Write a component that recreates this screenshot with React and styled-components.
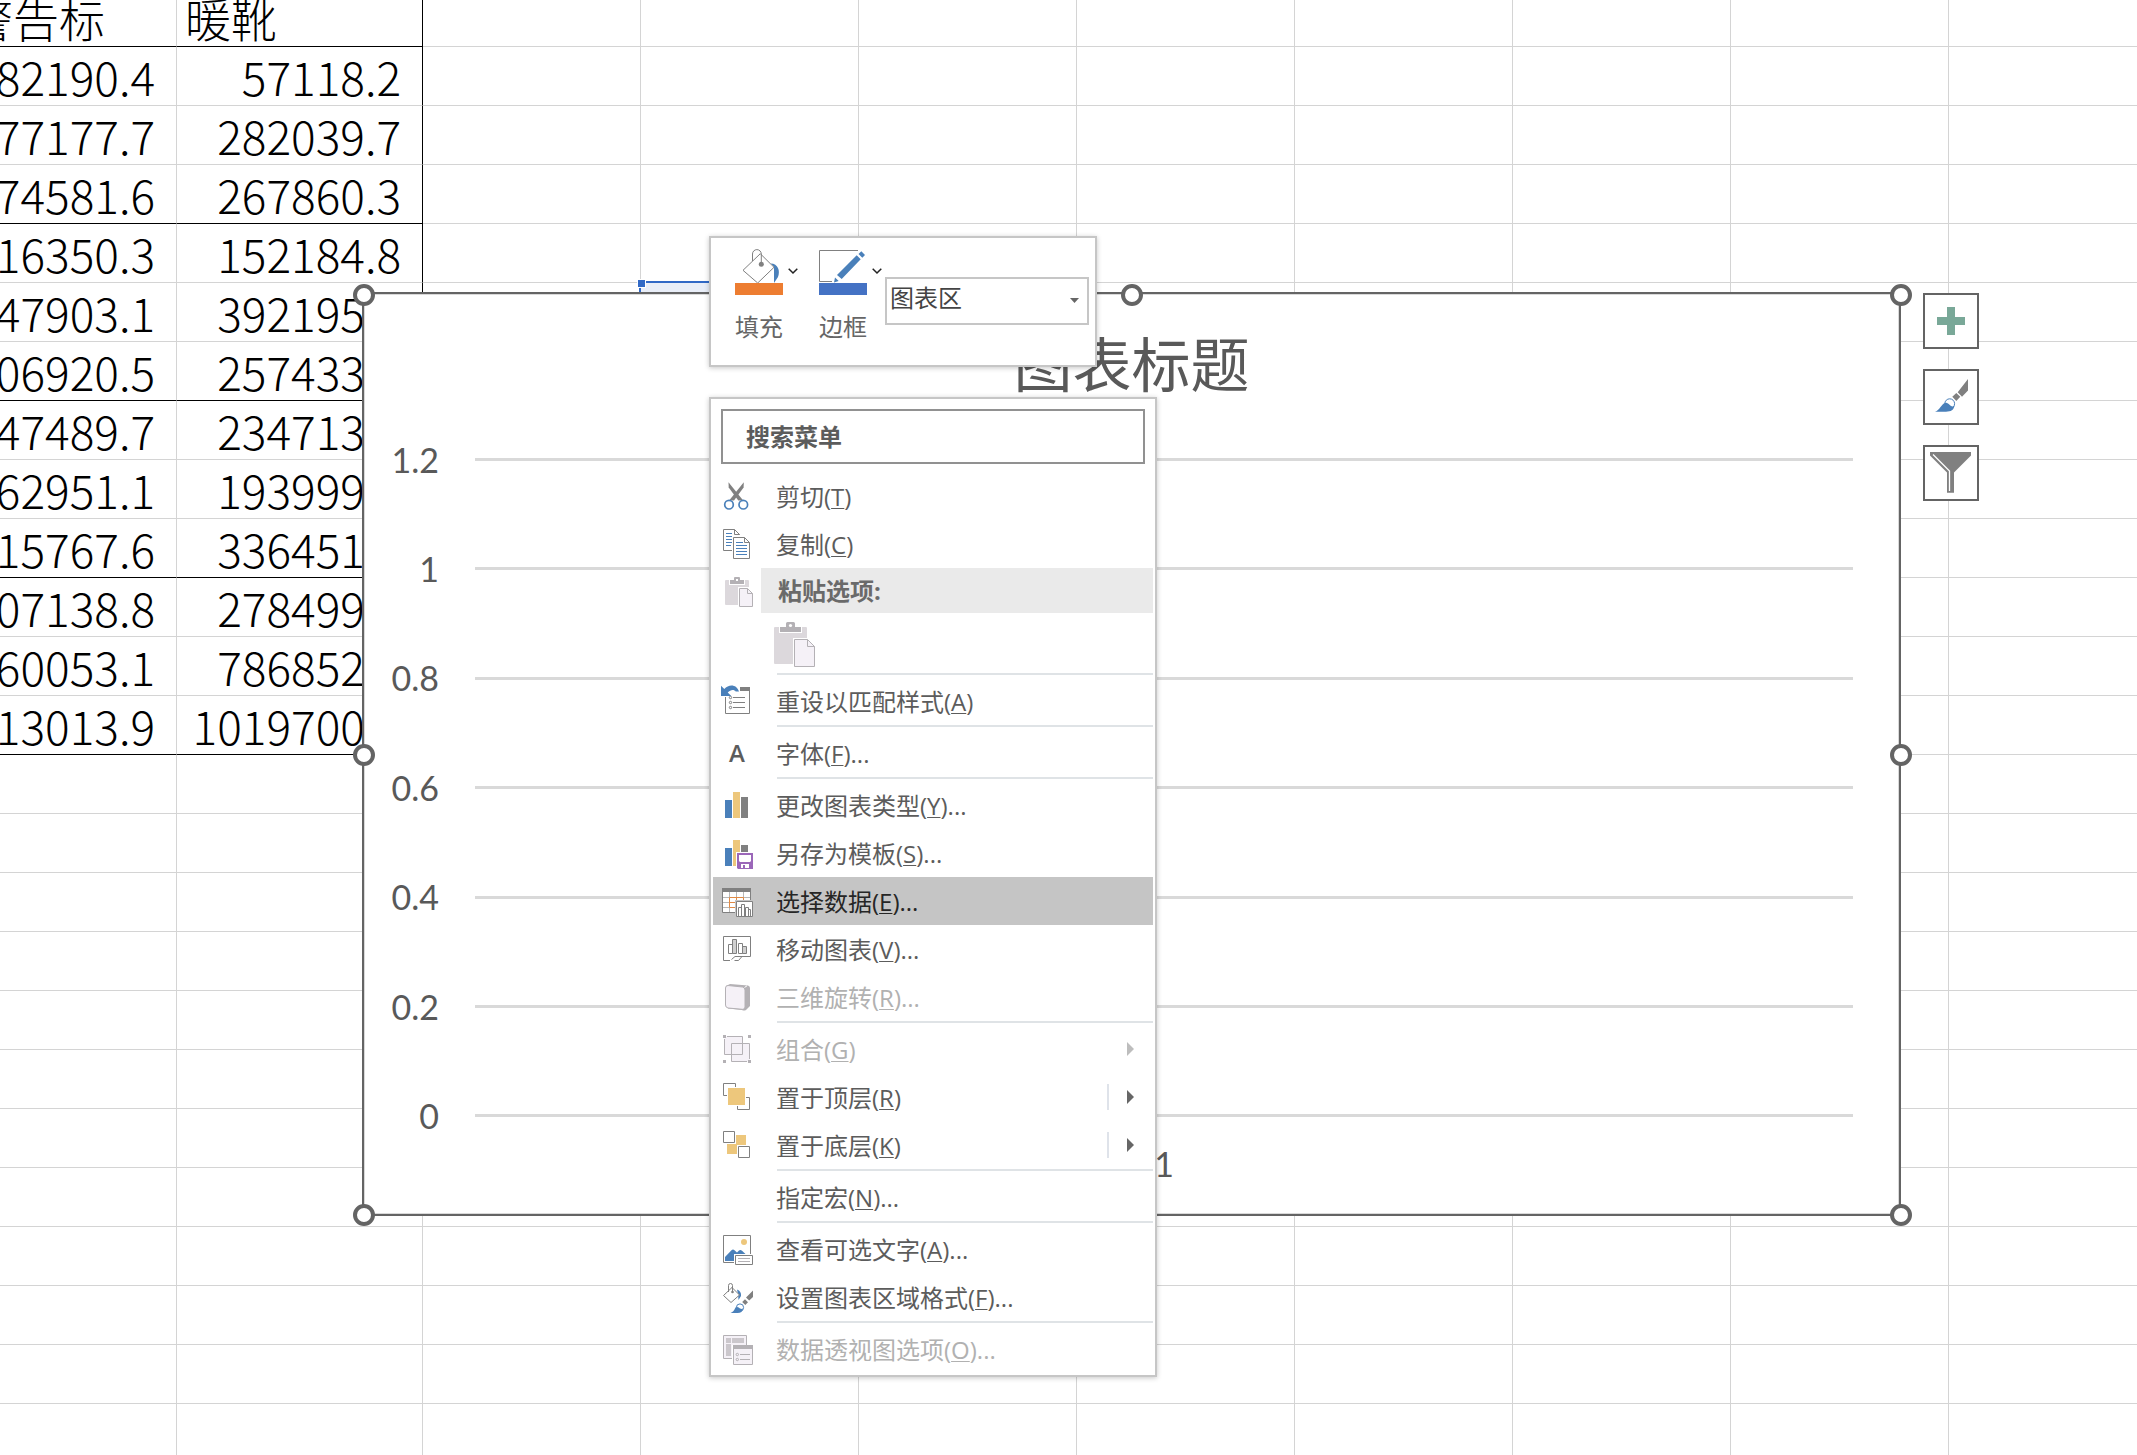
import React from "react";
import styled, { createGlobalStyle, css } from "styled-components";

const GRAY = "#808080";
const BLUE = "#4a80ba";
const GOLD = "#edc77c";
const MUTED = "#b4b1b5";
const PALE = "#f5f1f7";

const Global = createGlobalStyle`
  * { box-sizing: border-box; }
  body { margin: 0; background: #fff; overflow: hidden; }
  button, input, select { font: inherit; color: inherit; margin: 0; }
`;

const Workspace = styled.main`
  position: relative;
  height: 100vh;
  overflow: hidden;
  font-family: "Open Sans", "Noto Sans CJK SC", sans-serif;
  font-size: 24px;
  line-height: 32px;
  color: #5c5c5c;
`;

/* ---------- worksheet ---------- */

const Sheet = styled.table`
  width: calc(100% + 42px);
  margin: -12px 0 0 -41px;
  table-layout: fixed;
  border-collapse: separate;
  border-spacing: 0;
  font-family: "Noto Sans CJK SC", sans-serif;
  font-weight: 300;
  font-size: 46px;
  line-height: 58px;
  color: #000;
`;

const Column = styled.col`
  width: ${(p) => (p.$w ? p.$w + "px" : "auto")};
`;

const cell = css`
  position: relative;
  height: 59px;
  padding: 0 21px 0 8px;
  white-space: nowrap;
  border-right: 1px solid ${(p) => (p.$edge ? "#000" : "#d4d4d4")};
  border-bottom: 1px solid ${(p) => (p.$rule ? "#000" : "#d4d4d4")};
`;

const Cell = styled.td`
  ${cell}
  text-align: right;
`;

const HeadCell = styled.th`
  ${cell}
  font-weight: inherit;
  text-align: left;
`;

const Selection = styled.div`
  position: absolute;
  top: -2px;
  left: -2px;
  width: 220px;
  height: 61px;
  border: 2px solid #3169c6;
  background: #e9eef8;

  &::before {
    content: "";
    position: absolute;
    top: -4px;
    left: -4px;
    width: 7px;
    height: 7px;
    border: 1px solid #fff;
    background: #3169c6;
  }
`;

/* ---------- chart ---------- */

const ChartObject = styled.section`
  position: absolute;
  top: 292px;
  left: 362px;
  width: 1539px;
  height: 924px;
  display: flex;
  flex-direction: column;
  padding: 28px 46px 16px 8px;
  border: 2px solid #646464;
  background: #fff;
  box-shadow: inset 0 0 0 1px #d9d9d9;
  color: #595959;
`;

const ChartTitle = styled.h1`
  margin: 0 0 0 38px;
  font-family: "Noto Sans CJK SC", sans-serif;
  font-weight: 400;
  font-size: 59px;
  line-height: 80px;
  text-align: center;
`;

const Plot = styled.div`
  display: flex;
  flex-direction: column;
  margin-top: 3px;
  font-family: Lato, "Noto Sans CJK SC", sans-serif;
  font-size: 34px;
`;

const GridRow = styled.div`
  display: flex;
  align-items: center;
  gap: 36px;
  height: ${(p) => (p.$tall ? 110 : 109)}px;
`;

const AxisLabel = styled.span`
  width: 67px;
  line-height: 40px;
  text-align: right;
`;

const GridLine = styled.span`
  flex: 1;
  height: 3px;
  background: #d9d9d9;
`;

const Category = styled.div`
  padding-left: 103px;
  line-height: 40px;
  margin-top: -26px;
  text-align: center;
`;

const Handle = styled.span`
  position: absolute;
  top: ${(p) => p.$y};
  left: ${(p) => p.$x};
  width: 22px;
  height: 22px;
  margin: -11px;
  border: 4px solid #646464;
  border-radius: 50%;
  background: #fff;
`;

const SideButtons = styled.div`
  position: absolute;
  top: 293px;
  left: 1923px;
  display: flex;
  flex-direction: column;
  gap: 20px;
`;

const SideButton = styled.button`
  width: 56px;
  height: 56px;
  padding: 0;
  border: 2px solid #646464;
  background: #fff;

  svg { display: block; }
`;

/* ---------- popups ---------- */

const Popups = styled.div`
  position: absolute;
  top: 236px;
  left: 709px;
  display: flex;
  flex-direction: column;
  align-items: flex-start;
  gap: 30px;
`;

const panel = css`
  border: 2px solid #c6c6c6;
  background: #fff;
  box-shadow: 0 1px 5px rgba(0, 0, 0, 0.22);
`;

const MiniToolbar = styled.div`
  ${panel}
  display: flex;
  align-items: flex-start;
  width: 388px;
  padding: 9px 6px 22px 24px;
`;

const ToolButton = styled.button`
  display: grid;
  grid-template-columns: 48px 10px;
  column-gap: 5px;
  row-gap: 16px;
  align-items: center;
  margin-right: ${(p) => p.$gap}px;
  padding: 0;
  border: 0;
  background: none;
  color: #666;
  white-space: nowrap;

  svg { display: block; overflow: visible; }
`;

const SelectBox = styled.div`
  position: relative;
  flex: 1;
  margin-top: 30px;

  svg {
    position: absolute;
    top: 21px;
    right: 10px;
    pointer-events: none;
  }
`;

const AreaSelect = styled.select`
  display: block;
  width: 100%;
  height: 48px;
  padding: 0 28px 6px 3px;
  border: 2px solid #c6c6c6;
  border-radius: 0;
  appearance: none;
  background: #fff;
  color: #444;
`;

const Menu = styled.div`
  ${panel}
  display: flex;
  flex-direction: column;
  width: 448px;
  padding: 10px 2px 2px;
`;

const SearchInput = styled.input`
  height: 55px;
  margin: 0 8px 8px;
  padding: 0 23px;
  border: 2px solid #919191;
  background: #fff;
  font-weight: 700;

  &::placeholder { color: #5c5c5c; opacity: 1; }
`;

const MenuItem = styled.button`
  display: flex;
  align-items: center;
  gap: 23px;
  height: 48px;
  padding: 0 19px 0 8px;
  border: 0;
  background: ${(p) => (p.$active ? "#c5c5c5" : "transparent")};
  color: ${(p) => (p.disabled ? "#b1b1b1" : p.$active ? "#262626" : "#5c5c5c")};
  text-align: left;
  white-space: nowrap;
`;

const IconSlot = styled.span`
  display: grid;
  place-items: center;
  width: 32px;
  height: 32px;
  font-weight: 600;

  svg { display: block; overflow: visible; }
`;

const ItemText = styled.span`
  flex: 1;
  padding-top: 2px;

  u {
    text-decoration-thickness: 1px;
    text-underline-offset: 2px;
  }
`;

const Split = styled.span`
  width: 2px;
  height: 26px;
  margin-right: -5px;
  background: #dfe3ea;
`;

const Divider = styled.hr`
  width: auto;
  height: 2px;
  margin: 0 0 2px 64px;
  border: 0;
  background: #dfe3e6;
`;

const PasteHeader = styled.div`
  display: flex;
  align-items: center;
  gap: 8px;
  height: 45px;
  padding-left: 8px;
`;

const PasteTitle = styled.strong`
  flex: 1;
  padding: 7px 17px 6px;
  background: #eaeaea;
  color: #6a6a6a;
`;

const PasteOptions = styled.div`
  display: flex;
  align-items: center;
  height: 60px;
  padding: 3px 0 0 61px;
`;

const PasteButton = styled.button`
  padding: 0;
  border: 0;
  background: none;

  svg { display: block; }
`;

/* ---------- icons ---------- */

const Icon = ({ size = 32, w, h, children }) => (
  <svg width={w || size} height={h || size} viewBox={`0 0 ${w || size} ${h || size}`} fill="none" aria-hidden="true">
    {children}
  </svg>
);

const CutIcon = () => (
  <Icon>
    <path d="M7.5 2.3 7.7 7.5 17.3 20.5 22 20.3 Z" fill={GRAY} />
    <path d="M22.8 2.3 22.6 7.5 13 20.5 8.3 20.3 Z" fill={GRAY} />
    <circle cx="8" cy="24.7" r="4.3" fill="#fff" stroke={BLUE} strokeWidth="1.7" />
    <circle cx="22.3" cy="24.7" r="4.3" fill="#fff" stroke={BLUE} strokeWidth="1.7" />
  </Icon>
);

const CopyIcon = () => (
  <Icon>
    <path d="M11 22.5H2.5V1.5H13.5L18.5 6.5V7M13.5 1.5V6.5H18.5" stroke={GRAY} />
    <path d="M5 5.5H11M5 8.5H11M5 11.5H11M5 14.5H11M5 17.5H10" stroke={BLUE} />
    <path d="M12.5 9.5H23.5L28.5 14.5V30.5H12.5Z" fill="#fff" stroke={GRAY} />
    <path d="M23.5 9.5V14.5H28.5" stroke={GRAY} />
    <path d="M15 14.5H22M15 17.5H26M15 20.5H26M15 23.5H26M15 26.5H26" stroke={BLUE} />
  </Icon>
);

const PasteIcon = () => (
  <Icon>
    <rect x="4" y="5" width="24" height="25" rx="1" fill="#dcd8dc" />
    <path d="M8 4H24V10H8Z" fill="#fff" />
    <path d="M9 5H13V3Q13 2 14 2H18Q19 2 19 3V5H23V9H9Z" fill={MUTED} />
    <rect x="15" y="4" width="2" height="2" fill="#fff" />
    <path d="M17 12H28L33 17V33H17Z" fill="#fff" />
    <path d="M18.5 13.5H26.5L31.5 18.5V31.5H18.5Z" fill={PALE} stroke={MUTED} />
    <path d="M26.5 13.5V18.5H31.5" stroke={MUTED} />
  </Icon>
);

const PasteLargeIcon = () => (
  <Icon w={42} h={46}>
    <rect x="0" y="5" width="33" height="37" rx="1" fill="#dcd8dc" />
    <path d="M5 4H28V11H5Z" fill="#fff" />
    <path d="M6 5H12V1.5Q12 0 13.5 0H19.5Q21 0 21 1.5V5H27V10H6Z" fill={MUTED} />
    <circle cx="16.5" cy="3.5" r="1.6" fill="#fff" />
    <path d="M19 16H36L42 23V46H19Z" fill="#fff" />
    <path d="M20.5 17.5H33.5L40.5 24.5V44.5H20.5Z" fill={PALE} stroke={MUTED} />
    <path d="M33.5 17.5V24.5H40.5" stroke={MUTED} />
  </Icon>
);

const ResetIcon = () => (
  <Icon>
    <path d="M19 2.5H28.5V28.5H4.5V12" stroke={GRAY} />
    <path d="M19 2H29V6H19Z" fill={GRAY} />
    <path d="M12 12.5H24M12 17.5H24M12 22.5H24" stroke={GRAY} />
    <circle cx="9.5" cy="12.5" r="1.2" stroke={GRAY} />
    <circle cx="9.5" cy="17.5" r="1.2" stroke={GRAY} />
    <circle cx="9.5" cy="22.5" r="1.2" stroke={GRAY} />
    <path d="M0 .7V11H10.3L6.7 7.5C9.5 4.5 13 4.2 14.7 6.5H18C16-.6 8-1.6 3.3 4Z" fill={BLUE} />
  </Icon>
);

const TypeIcon = () => (
  <Icon>
    <path d="M4 11H11V29H4Z" fill={BLUE} />
    <path d="M12 3H19V29H12Z" fill={GOLD} />
    <path d="M20 8H27V29H20Z" fill={GRAY} />
  </Icon>
);

const TemplateIcon = () => (
  <Icon>
    <path d="M4 11H11V29H4Z" fill={BLUE} />
    <path d="M12 3H19V15H15V29H12Z" fill={GOLD} />
    <path d="M20 8H27V15H20Z" fill={GRAY} />
    <path d="M16 16H32V32H17L16 31Z" fill="#9b67b9" />
    <path d="M18 18H30V24L29 25H19L18 24Z" fill="#fff" />
    <path d="M20 27H28V31H24V28H22V31H20Z" fill="#fff" />
  </Icon>
);

const DataIcon = () => (
  <Icon>
    <path d="M1.5 3.5H29.5V27.5H1.5Z" fill="#fff" />
    <path d="M2 12.5H29M2 17.5H29M2 22.5H29M8.5 7V27M15.5 7V27M22.5 7V27" stroke="#b8b8b8" />
    <path d="M15 22.5H8.5V12.5H22.5V16M8.5 17.5H22M15.5 12V22" stroke="#e08a45" />
    <path d="M1.5 3.5H29.5V27.5H1.5Z" stroke={GRAY} />
    <path d="M1 3H30V7H1Z" fill={GRAY} />
    <path d="M14 15H33V33H14Z" fill="#c5c5c5" />
    <path d="M15.5 16.5H31.5V31.5H15.5Z" fill="#fff" stroke={GRAY} />
    <path d="M17.5 31V22.5H20.5V31M20.5 31V19.5H23.5V31M24.5 31V22.5H27.5V31M27.5 31V24.5H29.5V31" stroke={GRAY} />
  </Icon>
);

const MoveIcon = () => (
  <Icon>
    <path d="M9 27.5H2.5V3.5H29.5V23.5H21L17.5 27.5H13.5M10.5 26.5L14 23.5H21" stroke={GRAY} />
    <path d="M7.5 11.5H11.5V20.5H7.5ZM17.5 10.5H21.5V20.5H17.5Z" stroke={GRAY} />
    <path d="M11.5 6.5H15.5V20.5H11.5ZM21.5 13.5H25.5V20.5H21.5Z" fill="#d0d0d0" stroke={GRAY} />
  </Icon>
);

const RotateIcon = () => (
  <Icon>
    <path d="M5 5 9 3 27 4.5Q29 5 29 7V25L25 29Q23 30 21 29L7 27.5Z" fill={MUTED} />
    <path d="M7 4.5 21.5 6Q24 6.5 24 9V26Q24 28.5 21.5 28.3L7 27Q4.5 26.5 4.5 24V7Q4.5 4.5 7 4.5Z" fill={PALE} stroke={MUTED} />
    <path d="M23.5 6.5 26 4.8" stroke="#fff" />
  </Icon>
);

const GroupIcon = () => (
  <Icon>
    <path d="M3.5 3.5H21.5V21.5H3.5Z" fill={PALE} />
    <path d="M10.5 10.5H28.5V28.5H10.5Z" fill={PALE} />
    <path d="M6 3.5H21.5V21.5H3.5V6M26 28.5H10.5V10.5H28.5V26" stroke={MUTED} />
    <path d="M2 2H5V5H2ZM27 2H30V5H27ZM2 27H5V30H2ZM27 27H30V30H27Z" fill={MUTED} />
  </Icon>
);

const FrontIcon = () => (
  <Icon>
    <path d="M6 14.5H2.5V2.5H14.5V6M25 16.5H28.5V28.5H16.5V25" stroke={GRAY} />
    <path d="M7 7H24V24H7Z" fill={GOLD} />
  </Icon>
);

const BackIcon = () => (
  <Icon>
    <path d="M15 6H25V16H15ZM6 15H16V25H6Z" fill={GOLD} />
    <path d="M2.5 2.5H13.5V13.5H2.5ZM17.5 17.5H28.5V28.5H17.5Z" fill="#fff" stroke={GRAY} />
  </Icon>
);

const AltTextIcon = () => (
  <Icon>
    <path d="M13 29.5H2.5V2.5H29.5V21" stroke={GRAY} />
    <circle cx="23" cy="9" r="3" fill={GOLD} />
    <path d="M4 28V24L10.5 17.3Q12 15.8 13.5 17.3L16 19.5 18 17.6Q19.5 16.4 21 17.8L24.5 21H13V28Z" fill={BLUE} />
    <path d="M14.5 22.5H31.5V31.5H14.5Z" fill="#fff" stroke={GRAY} />
    <path d="M17 25.5H29M17 28.5H29" stroke={MUTED} />
  </Icon>
);

const FormatIcon = () => (
  <Icon>
    <path d="M16 8.5Q20.5 10 20 15L17.5 19 17 13Z" fill={BLUE} />
    <path d="M11 6.5 18.5 14 10 21.5 2.5 14.5Z" fill="#fff" stroke={GRAY} />
    <path d="M7.5 11V4.5Q7.5 2.5 9.5 2.5T11.5 4.5V11" stroke={GRAY} />
    <circle cx="11.5" cy="11" r="1.3" fill={GRAY} />
    <path d="M32 9.5V16L28.2 19.5 25 16.5ZM24 18.2 27 21.2 24.3 24 21.2 21Z" fill={GRAY} />
    <circle cx="19" cy="26.5" r="3.6" fill="#fff" stroke={BLUE} />
    <path d="M9.5 32Q12.5 31 14.5 26.5 17 25 19 27.5 21 28.3 22 27.5 21.5 32 16.5 32Z" fill={BLUE} />
  </Icon>
);

const PivotIcon = () => (
  <Icon>
    <path d="M2.5 2.5H25.5V25.5H2.5Z" fill={PALE} stroke={MUTED} />
    <path d="M5 5H10V10H5ZM11 5H23V10H11ZM5 11H10V23H5Z" fill="#cbc7cc" />
    <path d="M11 12H33V33H11Z" fill="#fff" />
    <path d="M12.5 13.5H31.5V31.5H12.5Z" fill={PALE} stroke={MUTED} />
    <path d="M12 12H32V16H12Z" fill={MUTED} />
    <path d="M19 21.5H29M19 26.5H29" stroke={MUTED} />
    <circle cx="16.3" cy="21.5" r="1.2" stroke={MUTED} />
    <circle cx="16.3" cy="26.5" r="1.2" stroke={MUTED} />
  </Icon>
);

const FillIcon = () => (
  <Icon size={48}>
    <path d="M35.7 16.5C43 16.5 45.5 24 43 30L39 36V20Z" fill={BLUE} />
    <path d="M25.3 6.7 39 20.3 22.7 36 8 23.3Z" fill="#fff" stroke={GRAY} />
    <path d="M17.5 14V7A4.4 4.4 0 0 1 26.3 7V17" stroke={GRAY} />
    <circle cx="26.3" cy="17.3" r="2.5" fill={GRAY} />
    <path d="M0 36H48V48H0Z" fill="#ed7d31" />
  </Icon>
);

const OutlineIcon = () => (
  <Icon size={48}>
    <path d="M39 3.5H.5V34.5H13" stroke={GRAY} />
    <path d="M37.7 8.3 41.7 12.3 22.7 32 18 28ZM15 35.5 16 30.5 19.7 34ZM42.3 4.2 46 8 43.3 10.7 39.5 7Z" fill={BLUE} />
    <path d="M0 36H48V48H0Z" fill="#4472c4" />
  </Icon>
);

const Chevron = () => (
  <Icon w={10} h={6}>
    <path d="M.7.7 5 5 9.3.7" stroke="#222" strokeWidth="1.5" />
  </Icon>
);

const DropArrow = () => (
  <Icon w={9} h={5}>
    <path d="M0 0H9L4.5 5Z" fill="#666" />
  </Icon>
);

const SubArrow = ({ muted }) => (
  <Icon w={7} h={14}>
    <path d="M0 0 7 7 0 14Z" fill={muted ? "#bdbdbd" : "#666"} />
  </Icon>
);

const PlusIcon = () => (
  <Icon size={52}>
    <path d="M22 12H30V22H40V30H30V40H22V30H12V22H22Z" fill="#79a898" />
  </Icon>
);

const BrushIcon = () => (
  <Icon size={52}>
    <path d="M43 8V19.5L37 25.7 32.7 21.3ZM31.3 22 35.3 25.7 31.3 30 27.3 25.7Z" fill={GRAY} />
    <circle cx="24.7" cy="32.7" r="4.9" fill="#fff" stroke={BLUE} />
    <path d="M10 40.7C15 39 16.5 33 20 32 23 31 24 34 26 35Q28 36 29.5 34.5C29 39 26 40.7 21 40.7Z" fill={BLUE} />
  </Icon>
);

const FunnelIcon = () => (
  <Icon size={52}>
    <path d="M5 5H46V8.5L29 25.5V45.7H22V25.5L5 8.5Z" fill={GRAY} />
    <path d="M8 7.5 24.5 24V44" stroke="#fff" strokeWidth="1.3" />
  </Icon>
);

/* ---------- content ---------- */

const columns = [218, 246, 218, 218, 218, 218, 218, 218, 218, 0];

const figures = [
  ["82190.4", "57118.2"],
  ["77177.7", "282039.7"],
  ["74581.6", "267860.3"],
  ["16350.3", "152184.8"],
  ["47903.1", "392195.0"],
  ["06920.5", "257433.0"],
  ["47489.7", "234713.0"],
  ["62951.1", "193999.0"],
  ["15767.6", "336451.0"],
  ["07138.8", "278499.0"],
  ["60053.1", "786852.0"],
  ["13013.9", "1019700.0"],
];
const ruledRows = [2, 5, 8, 11];
const sheetRows = Array.from({ length: 24 }, (_, i) => figures[i] || []);

const ticks = ["1.2", "1", "0.8", "0.6", "0.4", "0.2", "0"];

const handleX = ["0px", "50%", "calc(100% + 2px)"];
const handleY = ["1px", "calc(50% + 1px)", "calc(100% + 1px)"];

const groups = [
  [{ icon: <ResetIcon />, text: "重设以匹配样式", hot: "A" }],
  [{ icon: "A", text: "字体", hot: "F", more: true }],
  [
    { icon: <TypeIcon />, text: "更改图表类型", hot: "Y", more: true },
    { icon: <TemplateIcon />, text: "另存为模板", hot: "S", more: true },
    { icon: <DataIcon />, text: "选择数据", hot: "E", more: true, active: true },
    { icon: <MoveIcon />, text: "移动图表", hot: "V", more: true },
    { icon: <RotateIcon />, text: "三维旋转", hot: "R", more: true, disabled: true },
  ],
  [
    { icon: <GroupIcon />, text: "组合", hot: "G", disabled: true, sub: true },
    { icon: <FrontIcon />, text: "置于顶层", hot: "R", sub: true, split: true },
    { icon: <BackIcon />, text: "置于底层", hot: "K", sub: true, split: true },
  ],
  [{ text: "指定宏", hot: "N", more: true }],
  [
    { icon: <AltTextIcon />, text: "查看可选文字", hot: "A", more: true },
    { icon: <FormatIcon />, text: "设置图表区域格式", hot: "F", more: true },
  ],
  [{ icon: <PivotIcon />, text: "数据透视图选项", hot: "O", more: true, disabled: true }],
];

const Item = ({ icon, text, hot, more, active, disabled, sub, split }) => (
  <MenuItem type="button" role="menuitem" $active={active} disabled={disabled}>
    <IconSlot>{icon}</IconSlot>
    <ItemText>
      {text}(<u>{hot}</u>){more && "..."}
    </ItemText>
    {split && <Split />}
    {sub && <SubArrow muted={disabled} />}
  </MenuItem>
);

const Worksheet = () => (
  <Sheet>
    <colgroup>
      {columns.map((w, i) => (
        <Column key={i} $w={w} />
      ))}
    </colgroup>
    <thead>
      <tr>
        {columns.map((_, c) => (
          <HeadCell key={c} $rule={c < 2} $edge={c === 1}>
            {["警告标", "暖靴"][c]}
          </HeadCell>
        ))}
      </tr>
    </thead>
    <tbody>
      {sheetRows.map((row, r) => (
        <tr key={r}>
          {columns.map((_, c) => (
            <Cell key={c} $rule={c < 2 && ruledRows.includes(r)} $edge={c === 1 && r < figures.length}>
              {row[c]}
              {r === 4 && c === 3 && <Selection />}
            </Cell>
          ))}
        </tr>
      ))}
    </tbody>
  </Sheet>
);

const Chart = () => (
  <ChartObject aria-label="图表区">
    <ChartTitle>图表标题</ChartTitle>
    <Plot>
      {ticks.map((t, i) => (
        <GridRow key={t} $tall={i === 2 || i === 4}>
          <AxisLabel>{t}</AxisLabel>
          <GridLine />
        </GridRow>
      ))}
      <Category>1</Category>
    </Plot>
    {handleY.map((y, r) =>
      handleX.map((x, c) => (r === 1 && c === 1 ? null : <Handle key={x + y} $x={x} $y={y} />))
    )}
  </ChartObject>
);

export default function App() {
  return (
    <Workspace>
      <Global />
      <Worksheet />
      <Chart />
      <SideButtons>
        <SideButton type="button" aria-label="图表元素"><PlusIcon /></SideButton>
        <SideButton type="button" aria-label="图表样式"><BrushIcon /></SideButton>
        <SideButton type="button" aria-label="图表筛选器"><FunnelIcon /></SideButton>
      </SideButtons>
      <Popups>
        <MiniToolbar role="toolbar">
          <ToolButton type="button" $gap={21}>
            <FillIcon />
            <Chevron />
            <span>填充</span>
          </ToolButton>
          <ToolButton type="button" $gap={3}>
            <OutlineIcon />
            <Chevron />
            <span>边框</span>
          </ToolButton>
          <SelectBox>
            <AreaSelect aria-label="图表元素" defaultValue="area">
              <option value="area">图表区</option>
            </AreaSelect>
            <DropArrow />
          </SelectBox>
        </MiniToolbar>
        <Menu role="menu">
          <SearchInput type="text" placeholder="搜索菜单" aria-label="搜索菜单" />
          <Item icon={<CutIcon />} text="剪切" hot="T" />
          <Item icon={<CopyIcon />} text="复制" hot="C" />
          <PasteHeader>
            <IconSlot><PasteIcon /></IconSlot>
            <PasteTitle>粘贴选项:</PasteTitle>
          </PasteHeader>
          <PasteOptions>
            <PasteButton type="button" aria-label="粘贴"><PasteLargeIcon /></PasteButton>
          </PasteOptions>
          {groups.map((items, g) => (
            <React.Fragment key={g}>
              <Divider />
              {items.map((item) => (
                <Item key={item.text} {...item} />
              ))}
            </React.Fragment>
          ))}
        </Menu>
      </Popups>
    </Workspace>
  );
}
